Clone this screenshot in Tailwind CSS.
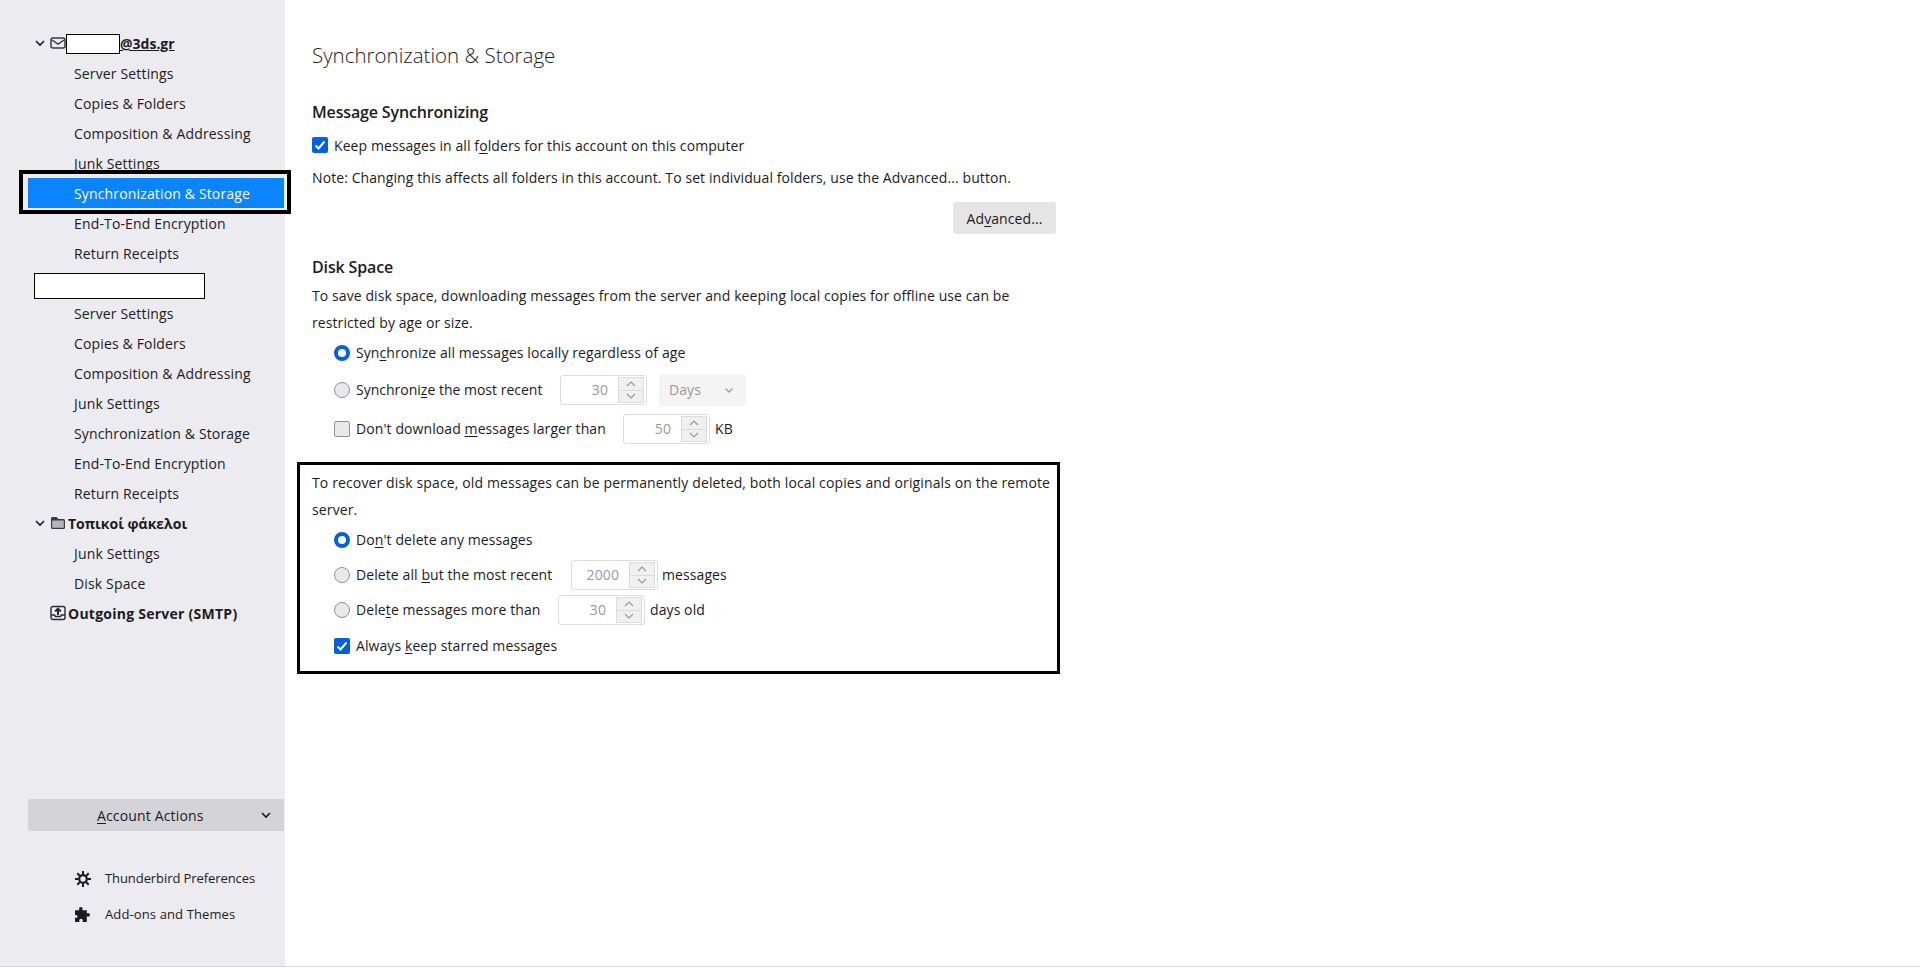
<!DOCTYPE html>
<html lang="en"><head><meta charset="utf-8"><title>Synchronization &amp; Storage</title>
<script src="https://cdn.jsdelivr.net/npm/@tailwindcss/browser@4"></script></head>
<body class="m-0 h-[968px] w-[1920px] overflow-hidden bg-white font-['Open_Sans','Noto_Sans',sans-serif] text-[14px] tracking-[0.09px] text-[#1c1b22]">
<div class="relative flex h-[967px] border-b border-[#d8d8dc]">
<aside class="flex h-full w-[285px] shrink-0 flex-col bg-[#ebebf0] pl-[28px] pt-[28px] tracking-[0.15px]">
  <div class="flex h-[30px] items-center pl-[6px] font-bold tracking-normal"><svg class="h-[12px] w-[12px]" viewBox="0 0 12 12" fill="none" stroke="#1c1b22" stroke-width="1.6"><path d="M2 4l4 4 4-4"/></svg><svg class="ml-[4px] h-[16px] w-[16px]" viewBox="0 0 16 16" fill="none" stroke="#3a3944" stroke-width="1.5"><rect x="1" y="3" width="14" height="10" rx="2"/><path d="M2 5l6 4 6-4"/></svg><span class="ml-[54px] underline">@3ds.gr</span></div>
  <div class="flex h-[30px] items-center pl-[46px]">Server Settings</div>
  <div class="flex h-[30px] items-center pl-[46px]">Copies &amp; Folders</div>
  <div class="flex h-[30px] items-center pl-[46px]">Composition &amp; Addressing</div>
  <div class="flex h-[30px] items-center pl-[46px]">Junk Settings</div>
  <div class="flex h-[30px] w-[256px] items-center bg-[#0a84ff] pl-[46px] text-white">Synchronization &amp; Storage</div>
  <div class="flex h-[30px] items-center pl-[46px]">End-To-End Encryption</div>
  <div class="flex h-[30px] items-center pl-[46px]">Return Receipts</div>
  <div class="h-[30px]"></div>
  <div class="flex h-[30px] items-center pl-[46px]">Server Settings</div>
  <div class="flex h-[30px] items-center pl-[46px]">Copies &amp; Folders</div>
  <div class="flex h-[30px] items-center pl-[46px]">Composition &amp; Addressing</div>
  <div class="flex h-[30px] items-center pl-[46px]">Junk Settings</div>
  <div class="flex h-[30px] items-center pl-[46px]">Synchronization &amp; Storage</div>
  <div class="flex h-[30px] items-center pl-[46px]">End-To-End Encryption</div>
  <div class="flex h-[30px] items-center pl-[46px]">Return Receipts</div>
  <div class="flex h-[30px] items-center pl-[6px] font-bold tracking-normal"><svg class="h-[12px] w-[12px]" viewBox="0 0 12 12" fill="none" stroke="#1c1b22" stroke-width="1.6"><path d="M2 4l4 4 4-4"/></svg><svg class="ml-[4px] h-[16px] w-[16px]" viewBox="0 0 16 16"><path d="M2.500 2h4l2 2h5A1.500 1.500 0 0 1 15 5.500v7a1.500 1.500 0 0 1-1.500 1.500h-11A1.500 1.500 0 0 1 1 12.500v-9A1.500 1.500 0 0 1 2.500 2z" fill="#3a3944"/><rect x="2.200" y="5.500" width="11.600" height="7.300" fill="#b4b4b8"/></svg><span class="ml-[2px]">Τοπικοί φάκελοι</span></div>
  <div class="flex h-[30px] items-center pl-[46px]">Junk Settings</div>
  <div class="flex h-[30px] items-center pl-[46px]">Disk Space</div>
  <div class="flex h-[30px] items-center pl-[22px] font-bold tracking-[0.25px]"><svg class="h-[16px] w-[16px]" viewBox="0 0 16 16" fill="none" stroke="#2b2a33" stroke-width="1.400"><rect x="1" y="1.500" width="14" height="13" rx="2"/><path d="M1 10h3.500l1 1.500h5l1-1.500H15"/><path d="M8 10V4M5.200 6.500L8 3.700l2.800 2.800" stroke-width="2"/></svg><span class="ml-[2px]">Outgoing Server (SMTP)</span></div>
  <div class="mt-[171px] flex h-[32px] w-[256px] items-center rounded-l-[3px] bg-[#d4d4d8] pl-[69px]"><span><u class="underline-offset-2">A</u>ccount Actions</span><svg class="ml-[56px] h-[12px] w-[12px]" viewBox="0 0 12 12" fill="none" stroke="#1c1b22" stroke-width="1.600"><path d="M2 4l4 4 4-4"/></svg></div>
  <div class="mt-[30px] flex h-[36px] items-center pl-[47px] text-[13px] tracking-[-0.08px]"><svg class="h-[16px] w-[16px]" viewBox="0 0 16 16" fill="none" stroke="#1c1b22"><circle cx="8" cy="8" r="3.800" stroke-width="2.200"/><path stroke-width="2" d="M8 0v3.500M8 12.500V16M0 8h3.500M12.500 8H16M2.300 2.300l2.400 2.400M11.300 11.300l2.400 2.400M13.700 2.300l-2.400 2.400M4.700 11.300l-2.400 2.400"/></svg><span class="ml-[14px]">Thunderbird Preferences</span></div>
  <div class="flex h-[36px] items-center pl-[47px] text-[13px] tracking-[0.12px]"><svg class="h-[16px] w-[16px]" viewBox="0 0 16 16" fill="#1c1b22"><path d="M4 1.800A1.800 1.800 0 0 1 7.600 1.800c0 .6-.3.9-.3 1.500h4.500v3.300c.4-.3.700-.7 1.300-.7a1.900 1.900 0 0 1 0 3.800c-.6 0-.9-.4-1.300-.7V15H7.500c0-.6.300-1 .3-1.400a1.800 1.800 0 0 0-3.600 0c0 .4.300.8.300 1.400H0v-4.200c.8-.1 2.500.2 2.500-1.400S.8 8.100 0 8V3.300h4.300c0-.6-.3-.9-.3-1.500z"/></svg><span class="ml-[14px]">Add-ons and Themes</span></div>
</aside>
<main class="w-[744px] pl-[27px] pt-[35px] box-content">
  <h1 class="flex h-[40px] items-center text-[20.500px] font-light tracking-normal">Synchronization &amp; Storage</h1>
  <h2 class="mt-[25px] flex h-[24px] items-center text-[16px] font-semibold tracking-[-0.15px]">Message Synchronizing</h2>
  <div class="mt-[6px] flex h-[30px] items-center"><span class="flex h-[16px] w-[16px] items-center justify-center rounded-[2px] bg-[#0060df]"><svg class="h-[12px] w-[12px]" viewBox="0 0 12 12" fill="none" stroke="#fff" stroke-width="2"><path d="M1.500 6.500l3 3 6-7"/></svg></span><span class="ml-[6px]">Keep messages in all f<u class="underline-offset-2">o</u>lders for this account on this computer</span></div>
  <p class="mt-[2px] flex h-[30px] items-center">Note: Changing this affects all folders in this account. To set individual folders, use the Advanced... button.</p>
  <div class="mt-[10px] flex h-[32px] justify-end"><button class="h-[32px] w-[103px] rounded-[3px] bg-[#e5e5e5]">Ad<u class="underline-offset-2">v</u>anced...</button></div>
  <h2 class="mt-[21px] flex h-[24px] items-center text-[16px] font-semibold tracking-[-0.15px]">Disk Space</h2>
  <p class="mt-[3px] leading-[27px]">To save disk space, downloading messages from the server and keeping local copies for offline use can be<br>restricted by age or size.</p>
  <div class="mt-[2px] flex h-[30px] items-center pl-[22px]"><span class="h-[16px] w-[16px] rounded-full border-[4px] border-[#0060df] bg-white"></span><span class="ml-[6px] pb-[2px]">Syn<u class="underline-offset-2">c</u>hronize all messages locally regardless of age</span></div>
  <div class="mt-[7px] flex h-[30px] items-center pl-[22px]"><span class="h-[16px] w-[16px] rounded-full border border-[#8f8f9d] bg-[#e9e9ed]"></span><span class="ml-[6px] w-[204px] pb-[2px] tracking-[0px]">Synchroni<u class="underline-offset-2">z</u>e the most recent</span>
    <div class="flex h-[30px] w-[87px] items-center rounded-[3px] border border-[#dcdcdc] p-[2px]"><span class="flex-1 pr-[10px] pb-[2px] text-right text-[#9a9a9a]">30</span><span class="flex h-[26px] w-[26px] flex-col border border-[#dcdcdc] bg-[#f0f0f0]"><span class="flex flex-1 items-center justify-center border-b border-[#dcdcdc]"><svg class="h-[8px] w-[10px]" viewBox="0 0 10 8" fill="none" stroke="#9a9a9a" stroke-width="1.200"><path d="M1 6l4-4 4 4"/></svg></span><span class="flex flex-1 items-center justify-center"><svg class="h-[8px] w-[10px]" viewBox="0 0 10 8" fill="none" stroke="#9a9a9a" stroke-width="1.200"><path d="M1 2l4 4 4-4"/></svg></span></span></div>
    <div class="ml-[12px] flex h-[32px] w-[87px] items-center rounded-[3px] bg-[#f4f4f4] pl-[10px] text-[#9a9a9a]"><span class="pb-[2px]">Days</span><svg class="ml-[23px] h-[10px] w-[10px]" viewBox="0 0 10 10" fill="none" stroke="#9a9a9a" stroke-width="1.300"><path d="M1.500 3.500L5 7l3.500-3.500"/></svg></div></div>
  <div class="mt-[9px] flex h-[30px] items-center pl-[22px]"><span class="h-[16px] w-[16px] rounded-[2px] border border-[#8f8f9d] bg-[#e9e9ed]"></span><span class="ml-[6px] w-[267px] pb-[2px]">Don't download <u class="underline-offset-2">m</u>essages larger than</span>
    <div class="flex h-[30px] w-[87px] items-center rounded-[3px] border border-[#dcdcdc] p-[2px]"><span class="flex-1 pr-[10px] pb-[2px] text-right text-[#9a9a9a]">50</span><span class="flex h-[26px] w-[26px] flex-col border border-[#dcdcdc] bg-[#f0f0f0]"><span class="flex flex-1 items-center justify-center border-b border-[#dcdcdc]"><svg class="h-[8px] w-[10px]" viewBox="0 0 10 8" fill="none" stroke="#9a9a9a" stroke-width="1.200"><path d="M1 6l4-4 4 4"/></svg></span><span class="flex flex-1 items-center justify-center"><svg class="h-[8px] w-[10px]" viewBox="0 0 10 8" fill="none" stroke="#9a9a9a" stroke-width="1.200"><path d="M1 2l4 4 4-4"/></svg></span></span></div><span class="ml-[5px] pb-[2px]">KB</span></div>
  <p class="mt-[25px] w-[760px] leading-[27px] tracking-[0.13px]">To recover disk space, old messages can be permanently deleted, both local copies and originals on the remote<br>server.</p>
  <div class="mt-[2px] flex h-[30px] items-center pl-[22px]"><span class="h-[16px] w-[16px] rounded-full border-[4px] border-[#0060df] bg-white"></span><span class="ml-[6px] pb-[2px]">Do<u class="underline-offset-2">n</u>'t delete any messages</span></div>
  <div class="mt-[5px] flex h-[30px] items-center pl-[22px]"><span class="h-[16px] w-[16px] rounded-full border border-[#8f8f9d] bg-[#e9e9ed]"></span><span class="ml-[6px] w-[215px] pb-[2px]">Delete all <u class="underline-offset-2">b</u>ut the most recent</span>
    <div class="flex h-[30px] w-[87px] items-center rounded-[3px] border border-[#dcdcdc] p-[2px]"><span class="flex-1 pr-[10px] pb-[2px] text-right text-[#9a9a9a]">2000</span><span class="flex h-[26px] w-[26px] flex-col border border-[#dcdcdc] bg-[#f0f0f0]"><span class="flex flex-1 items-center justify-center border-b border-[#dcdcdc]"><svg class="h-[8px] w-[10px]" viewBox="0 0 10 8" fill="none" stroke="#9a9a9a" stroke-width="1.200"><path d="M1 6l4-4 4 4"/></svg></span><span class="flex flex-1 items-center justify-center"><svg class="h-[8px] w-[10px]" viewBox="0 0 10 8" fill="none" stroke="#9a9a9a" stroke-width="1.200"><path d="M1 2l4 4 4-4"/></svg></span></span></div><span class="ml-[4px] pb-[2px]">messages</span></div>
  <div class="mt-[5px] flex h-[30px] items-center pl-[22px]"><span class="h-[16px] w-[16px] rounded-full border border-[#8f8f9d] bg-[#e9e9ed]"></span><span class="ml-[6px] w-[202px] pb-[2px]">Dele<u class="underline-offset-2">t</u>e messages more than</span>
    <div class="flex h-[30px] w-[87px] items-center rounded-[3px] border border-[#dcdcdc] p-[2px]"><span class="flex-1 pr-[10px] pb-[2px] text-right text-[#9a9a9a]">30</span><span class="flex h-[26px] w-[26px] flex-col border border-[#dcdcdc] bg-[#f0f0f0]"><span class="flex flex-1 items-center justify-center border-b border-[#dcdcdc]"><svg class="h-[8px] w-[10px]" viewBox="0 0 10 8" fill="none" stroke="#9a9a9a" stroke-width="1.200"><path d="M1 6l4-4 4 4"/></svg></span><span class="flex flex-1 items-center justify-center"><svg class="h-[8px] w-[10px]" viewBox="0 0 10 8" fill="none" stroke="#9a9a9a" stroke-width="1.200"><path d="M1 2l4 4 4-4"/></svg></span></span></div><span class="ml-[5px] pb-[2px]">days old</span></div>
  <div class="mt-[6px] flex h-[30px] items-center pl-[22px]"><span class="flex h-[16px] w-[16px] items-center justify-center rounded-[2px] bg-[#0060df]"><svg class="h-[12px] w-[12px]" viewBox="0 0 12 12" fill="none" stroke="#fff" stroke-width="2"><path d="M1.500 6.500l3 3 6-7"/></svg></span><span class="ml-[6px] pb-[2px]">Always <u class="underline-offset-2">k</u>eep starred messages</span></div>
</main>
<div class="absolute left-[66px] top-[34px] h-[20px] w-[54px] border border-black bg-white"></div>
<div class="absolute left-[34px] top-[273px] h-[26px] w-[171px] border border-black bg-white"></div>
<div class="absolute left-[19px] top-[170px] h-[44px] w-[272px] border-[4px] border-black"></div>
<div class="absolute left-[297px] top-[462px] h-[212px] w-[763px] border-[3px] border-black"></div>
</div>
</body></html>
